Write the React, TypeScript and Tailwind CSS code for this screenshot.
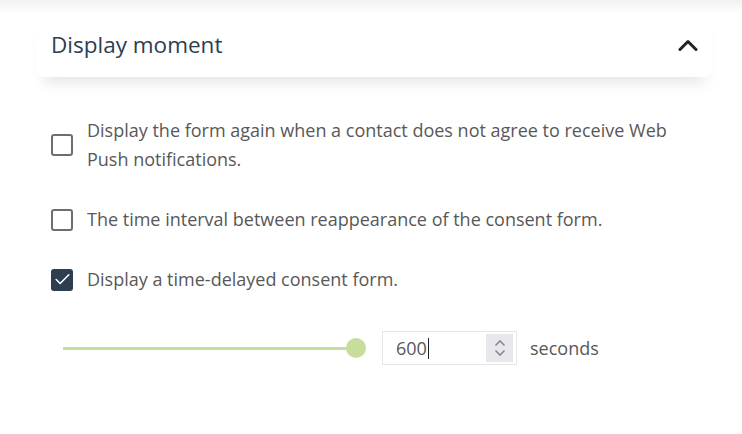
import { Check } from 'lucide-react';

function Checkbox({ checked }: { checked?: boolean }) {
  return checked ? (
    <span className="flex size-[22px] flex-shrink-0 items-center justify-center rounded-[3px] bg-[#2d3e50]">
      <Check className="size-[19px] text-white" strokeWidth={2} />
    </span>
  ) : (
    <span className="block size-[22px] flex-shrink-0 rounded-[3px] border-[2.5px] border-[#6e6e6e] bg-white" />
  );
}

const options = [
  {
    label: 'Display the form again when a contact does not agree to receive Web Push notifications.',
    checked: false,
  },
  { label: 'The time interval between reappearance of the consent form.', checked: false },
  { label: 'Display a time-delayed consent form.', checked: true },
];

export default function App() {
  return (
    <div className="h-[434px] w-[742px] overflow-hidden bg-white font-['Open_Sans',sans-serif]">
      {/* shadow of the section above */}
      <div className="h-[13px] bg-gradient-to-b from-[#f1f1f1] to-white" />

      {/* Header card */}
      <div className="ml-[36px] mr-[30px] flex h-[64px] items-center justify-between rounded-b-lg bg-white pl-[15px] pr-[14px] shadow-[0_14px_14px_-8px_rgba(0,0,0,0.1)]">
        <h2 className="text-[22.5px] text-[#2d3e50]">Display moment</h2>
        <svg width="20" height="13" viewBox="0 0 20 13" fill="none" stroke="#222" strokeWidth="3" strokeLinecap="round" strokeLinejoin="round">
          <path d="M2 10.5 10 2.5l8 8" />
        </svg>
      </div>

      {/* Options */}
      <div className="mt-[39px] flex flex-col gap-[31px] pl-[51px] pr-[60px]">
        {options.map((o) => (
          <label key={o.label} className="flex items-center gap-[14px]">
            <Checkbox checked={o.checked} />
            <span className="text-[18px] leading-[29px] text-[#585858]">{o.label}</span>
          </label>
        ))}
      </div>

      {/* Slider + input */}
      <div className="mt-[37px] flex items-center pl-[63px]">
        <div className="relative flex h-[20px] w-[303px] items-center">
          <div className="h-[3px] w-[290px] bg-[#c6dd9c]" />
          <div className="absolute right-0 top-0 size-[20px] rounded-full bg-[#c6dd9c]" />
        </div>
        <div className="ml-[16px] flex h-[34px] w-[135px] items-center justify-between border border-[#e6e6e6] pl-[13px] pr-[3px]">
          <span className="flex items-center text-[18px] text-[#585858]">
            600<span className="ml-[1px] inline-block h-[21px] w-[1px] bg-[#222]" />
          </span>
          <span className="flex h-[28px] w-[27px] flex-col items-center justify-center bg-[#e7e7ec]">
            <svg width="14" height="22" viewBox="0 0 14 22" fill="none" stroke="#8a8a96" strokeWidth="1.6">
              <path d="M2.5 8.5 7 4l4.5 4.5" />
              <path d="M2.5 13.5 7 18l4.5-4.5" />
            </svg>
          </span>
        </div>
        <span className="ml-[13px] text-[18px] text-[#585858]">seconds</span>
      </div>
    </div>
  );
}
